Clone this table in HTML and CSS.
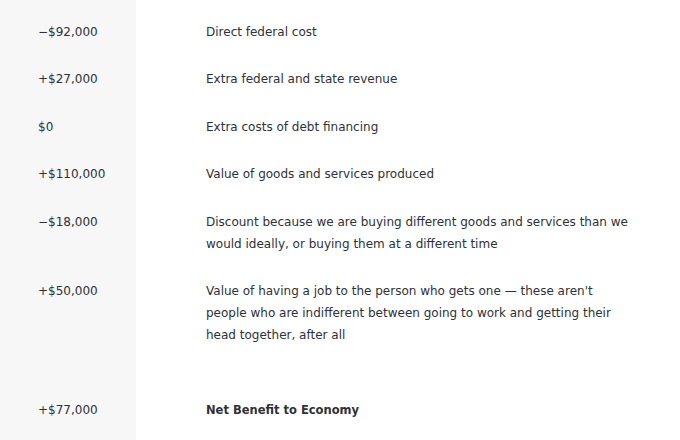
FILE: index.html
```html
<!DOCTYPE html>
<html>
<head>
<meta charset="utf-8">
<link rel="stylesheet" href="styles.css">
</head>
<body>
<table class="ledger">
  <tr class="first"><td class="amount">&minus;$92,000</td><td class="desc">Direct federal cost</td></tr>
  <tr><td class="amount">+$27,000</td><td class="desc">Extra federal and state revenue</td></tr>
  <tr><td class="amount">$0</td><td class="desc">Extra costs of debt financing</td></tr>
  <tr><td class="amount">+$110,000</td><td class="desc">Value of goods and services produced</td></tr>
  <tr><td class="amount">&minus;$18,000</td><td class="desc">Discount because we are buying different goods and services than we would ideally, or buying them at a different time</td></tr>
  <tr><td class="amount">+$50,000</td><td class="desc">Value of having a job to the person who gets one — these aren't people who are indifferent between going to work and getting their head together, after all</td></tr>
  <tr class="total"><td class="amount">+$77,000</td><td class="desc">Net Benefit to Economy</td></tr>
</table>
</body>
</html>
```
FILE: styles.css
```css
html, body {
  margin: 0;
  padding: 0;
  background: #ffffff;
}
body {
  font-family: "DejaVu Sans", Verdana, sans-serif;
  font-size: 12px;
  line-height: 22px;
  color: #2e3138;
}
.ledger {
  border-collapse: collapse;
}
.ledger td {
  vertical-align: top;
  padding-top: 12.75px;
  padding-bottom: 12.75px;
}
.ledger tr.first td {
  padding-top: 20.5px;
}
.amount {
  width: 98px;
  padding-left: 38px;
  padding-right: 0;
  background: #f7f7f7;
}
.desc {
  width: 426px;
  padding-left: 70px;
  padding-right: 0;
}
.ledger tr.total td {
  padding-top: 40.5px;
  padding-bottom: 19px;
}
.total .desc {
  font-weight: bold;
  font-size: 11.5px;
}
```
